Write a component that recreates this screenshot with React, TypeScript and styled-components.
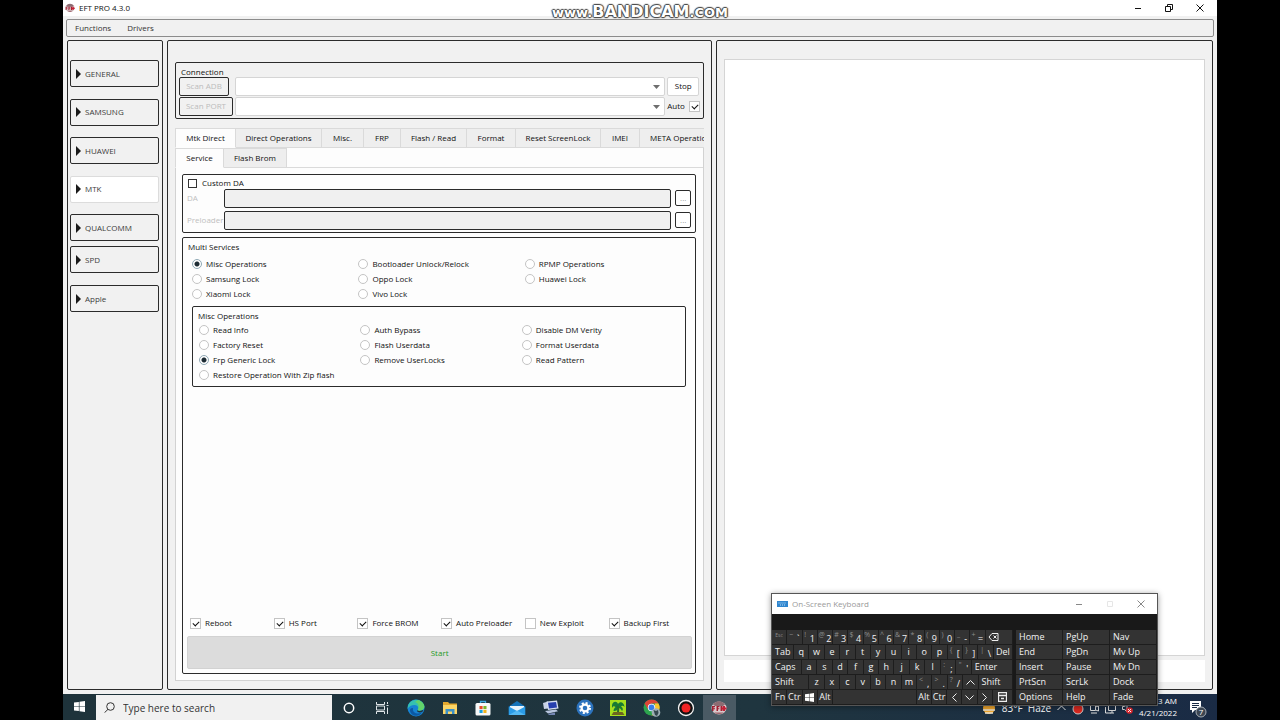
import React from "react";
import styled, { createGlobalStyle, css } from "styled-components";

const Global = createGlobalStyle`
  * { box-sizing: border-box; }
  body { margin: 0; background: #000; }
  body, button, input, select { font-family: "Open Sans", "Noto Sans", sans-serif; font-size: 8px; line-height: 12px; color: #111; }
  button, input, select { margin: 0; padding: 0; }
`;

const line = "#2b2b2b";

const Screen = styled.div`
  position: relative;
  min-height: 100vh;
  margin: 0 63px;
  display: flex;
  flex-direction: column;
  background: #f1f1f1;
`;

/* ---------- window chrome ---------- */

const TitleBar = styled.header`
  display: flex;
  align-items: center;
  height: 16px;
  padding: 0 11px 1px 2px;
  gap: 4px;
  background: #fff;
`;
const Title = styled.h1`
  flex: 1;
  margin: 0;
  font-size: 8px;
  font-weight: 400;
`;
const WindowButtons = styled.div`
  display: flex;
  gap: 19px;
`;
const IconButton = styled.button`
  display: flex;
  align-items: center;
  justify-content: center;
  width: 12px;
  height: 12px;
  border: 0;
  background: none;
  color: inherit;
`;
const MenuBar = styled.nav`
  display: flex;
  align-items: center;
  gap: 16px;
  height: 18px;
  margin: 3px 3px 3px;
  padding: 0 8px;
  border: 1px solid #8c8c8c;
  border-radius: 2px;
`;
const MenuItem = styled.button`
  border: 0;
  background: none;
  color: #333;
`;
const Watermark = styled.div`
  position: absolute;
  top: 2px;
  left: 0;
  right: 0;
  display: flex;
  justify-content: center;
  align-items: baseline;
  font-family: "DejaVu Sans", sans-serif;
  font-weight: 700;
  font-size: 13px;
  line-height: 19px;
  color: #fff;
  text-shadow: 1px 0 1px #444, -1px 0 1px #444, 0 1px 1px #444, 0 -1px 1px #444, 0 0 2px #666;
  pointer-events: none;
`;
const WatermarkName = styled.span`
  font-size: 16px;
`;

/* ---------- main columns ---------- */

const Columns = styled.main`
  flex: 1;
  display: flex;
  gap: 4px;
  padding: 0 4px 4px;
`;
const Panel = styled.section`
  display: flex;
  flex-direction: column;
  border: 1px solid ${line};
  border-radius: 2px;
`;
const Sidebar = styled(Panel)`
  width: 96px;
  padding: 19px 3px 0 2px;
  gap: 5px;
`;
const Center = styled(Panel)`
  flex: 546 1 0;
  min-width: 0;
  padding: 21px 7px 8px 7px;
`;
const LogPanel = styled(Panel)`
  flex: 496 1 0;
  min-width: 0;
  padding: 18px 7px 7px;
  gap: 4px;
`;
const SideGroup = styled.div<{ $height: number }>`
  display: flex;
  flex-direction: column;
  justify-content: space-between;
  height: ${(p) => p.$height}px;
`;
const SideButton = styled.button<{ $active?: boolean }>`
  display: flex;
  align-items: center;
  gap: 4px;
  height: 27px;
  padding: 0 5px;
  border: 1px solid ${(p) => (p.$active ? "#dcdcdc" : line)};
  border-radius: 2px;
  background: ${(p) => (p.$active ? "#fff" : "#f1f1f1")};
  color: #3c3c3c;
`;

/* ---------- form parts ---------- */

const Box = styled.div`
  border: 1px solid ${line};
  border-radius: 2px;
`;
const BoxTitle = styled.h2`
  margin: 0;
  font-size: 8px;
  font-weight: 400;
  line-height: 12px;
`;
const ConnectionBox = styled(Box)`
  padding: 5px 3px 2px;
`;
const ConnectionTitle = styled(BoxTitle)`
  margin-left: 2px;
  line-height: 8px;
`;
const ConnectionRow = styled.div`
  display: flex;
  align-items: center;
  height: 20px;
  gap: 2px;
`;
const ScanSlot = styled.div`
  flex: none;
  width: 54px;
`;
const ScanButton = styled.button<{ $width: number }>`
  display: block;
  width: ${(p) => p.$width}px;
  height: 19px;
  border: 1px solid ${line};
  border-radius: 2px;
  background: #f1f1f1;
  color: #bcbcbc;
`;
const ComboWrap = styled.div`
  position: relative;
  flex: 1;
  svg { position: absolute; right: 5px; top: 8px; pointer-events: none; }
`;
const Combo = styled.select`
  display: block;
  width: 100%;
  height: 19px;
  appearance: none;
  border: 1px solid #d5d5d5;
  border-radius: 2px;
  background: #fff;
`;
const ConnectionEnd = styled.div`
  flex: none;
  width: 33px;
`;
const StopButton = styled.button`
  width: 32px;
  height: 19px;
  border: 1px solid #d5d5d5;
  border-radius: 2px;
  background: #fff;
`;
const Choice = styled.label<{ $spread?: boolean }>`
  display: flex;
  align-items: center;
  justify-content: ${(p) => (p.$spread ? "space-between" : "flex-start")};
  gap: 4px;
  white-space: nowrap;
`;
const Check = styled.input.attrs({ type: "checkbox" })<{ $dark?: boolean }>`
  position: relative;
  flex: none;
  appearance: none;
  width: 11px;
  height: 11px;
  border: 1px solid ${(p) => (p.$dark ? "#333" : "#c4c4c4")};
  background: #fff;
  ${(p) => p.$dark && css`width: 9px; height: 9px; margin: 0 1px;`}
  &:checked::after {
    content: "";
    position: absolute;
    left: 2px;
    top: 2px;
    width: 5px;
    height: 3px;
    border-left: 1px solid #111;
    border-bottom: 1px solid #111;
    transform: rotate(-45deg);
  }
`;
const Radio = styled.input.attrs({ type: "radio" })`
  flex: none;
  appearance: none;
  width: 10px;
  height: 10px;
  border: 1px solid #c4c4c4;
  border-radius: 50%;
  background: #fff;
  &:checked {
    border-color: #8fa9b5;
    background: radial-gradient(circle, #1c2b33 0 2px, #fff 3px);
  }
`;

/* ---------- tabs ---------- */

const TabBar = styled.div`
  display: flex;
  flex: none;
  overflow: hidden;
`;
const MainTabs = styled(TabBar)`
  margin-top: 9px;
`;
const Tab = styled.button<{ $width: number; $active?: boolean }>`
  flex: none;
  width: ${(p) => p.$width}px;
  height: 20px;
  border: 1px solid #dadada;
  border-left-width: ${(p) => (p.$active ? 1 : 0)}px;
  border-bottom-color: ${(p) => (p.$active ? "#fdfdfd" : "#dadada")};
  background: ${(p) => (p.$active ? "#fdfdfd" : "#eee")};
  white-space: nowrap;
`;
const TabPage = styled.div`
  flex: 1;
  display: flex;
  flex-direction: column;
  border: 1px solid #d2d2d2;
  border-top: 0;
  background: #fdfdfd;
`;
const SubTabs = styled(TabBar)`
  margin-left: -1px;
  &::after { content: ""; flex: 1; border-bottom: 1px solid #dadada; }
`;
const ServicePage = styled.div`
  flex: 1;
  display: flex;
  flex-direction: column;
  gap: 4px;
  padding: 6px 7px 6px 6px;
`;

const CustomBox = styled(Box)`
  display: flex;
  flex-direction: column;
  padding: 4px 4px 1px 4px;
`;
const CustomChoice = styled(Choice)`
  height: 8px;
`;
const FileRow = styled.div`
  display: flex;
  align-items: center;
  gap: 4px;
  height: 22px;
`;
const FileLabel = styled.label`
  flex: none;
  width: 33px;
  color: #c0c0c0;
`;
const FileInput = styled.input`
  flex: 1;
  min-width: 0;
  height: 19px;
  border: 1px solid ${line};
  border-radius: 2px;
  background: #f0f0f0;
`;
const DotsButton = styled.button`
  flex: none;
  width: 16px;
  height: 16px;
  border: 1px solid ${line};
  border-radius: 2px;
  background: #fff;
  color: #999;
  line-height: 10px;
`;
const ServicesBox = styled(Box)`
  flex: 1;
  display: flex;
  flex-direction: column;
  padding: 3px 3px 4px 4px;
`;
const Choices = styled.div`
  display: grid;
  grid-template-columns: repeat(3, 1fr);
  grid-auto-rows: 15px;
`;
const ServiceChoices = styled(Choices)`
  margin: 3px 1px 0 5px;
`;
const ServicesTitle = styled(BoxTitle)`
  margin-left: 1px;
`;
const MiscBox = styled(Box)`
  height: 81px;
  margin: 5px 6px 0 5px;
  padding: 3px 2px 3px 5px;
`;
const MiscChoices = styled(Choices)`
  margin-left: 1px;
`;
const Options = styled.div`
  display: grid;
  grid-template-columns: repeat(6, 1fr);
  margin: auto 0 7px 3px;
`;
const StartButton = styled.button`
  height: 33px;
  border: 1px solid #d2d2d2;
  border-radius: 2px;
  background: #dcdcdc;
  color: #1e9a1e;
`;

const Log = styled.div`
  flex: 1;
  border: 1px solid #d5d5d5;
  background: #fff;
`;
const Command = styled.input`
  height: 22px;
  border: 0;
  background: #fff;
`;

/* ---------- taskbar ---------- */

const Taskbar = styled.footer`
  display: flex;
  height: 26px;
  padding-top: 1px;
  background: linear-gradient(90deg, #1e333b 0, #1f353f 60%, #1a2b45 100%);
  color: #fff;
`;
const StartMenu = styled.button`
  width: 33px;
  border: 0;
  background: none;
`;
const Search = styled.label`
  display: flex;
  align-items: center;
  gap: 8px;
  width: 236px;
  padding: 0 8px;
  background: #f1f1f1;
  color: #333;
`;
const SearchInput = styled.input`
  flex: 1;
  min-width: 0;
  border: 0;
  background: none;
  font-size: 10px;
  line-height: 16px;
  &::placeholder { color: #333; opacity: 1; }
`;
const AppButton = styled.button<{ $active?: boolean }>`
  display: flex;
  align-items: center;
  justify-content: center;
  width: 33px;
  border: 0;
  background: ${(p) => (p.$active ? "#4a5a64" : "none")};
`;
const Apps = styled.div`
  display: flex;
  justify-content: space-between;
  width: 404px;
`;
const Tray = styled.div`
  display: flex;
  align-items: flex-start;
  gap: 6px;
  margin-left: auto;
  padding-right: 10px;
  white-space: nowrap;
`;
const Weather = styled.span`
  font-size: 10px;
  line-height: 27px;
`;
const TrayIcon = styled.span`
  display: flex;
  align-items: center;
  height: 27px;
`;
const Clock = styled.time`
  display: flex;
  flex-direction: column;
  align-items: flex-end;
  margin-right: 4px;
  font-size: 8px;
  line-height: 12px;
`;

/* ---------- on-screen keyboard ---------- */

const Keyboard = styled.aside`
  position: absolute;
  right: 59px;
  bottom: 14px;
  width: 387px;
  border: 1px solid #555;
  background: #191919;
  box-shadow: 0 1px 6px rgba(0, 0, 0, 0.4);
  color: #f0f0f0;
`;
const KeyboardTitle = styled.div`
  display: flex;
  align-items: center;
  gap: 4px;
  height: 20px;
  margin-bottom: 16px;
  padding: 0 10px 0 5px;
  background: #fff;
  color: #999;
`;
const KeyboardName = styled.h2`
  flex: 1;
  margin: 0;
  font-size: 8px;
  font-weight: 400;
`;
const KeyboardButtons = styled(WindowButtons)`
  color: #888;
`;
const KeyArea = styled.div`
  display: flex;
  gap: 3px;
`;
const KeyRows = styled.div`
  display: grid;
  grid-auto-rows: 15px;
  width: 241px;
`;
const KeyRow = styled.div`
  display: flex;
`;
const NavKeys = styled.div`
  flex: 1;
  display: grid;
  grid-template-columns: repeat(3, 1fr);
  grid-auto-rows: 15px;
`;
const Key = styled.button<{ $grow?: number; $left?: boolean }>`
  position: relative;
  display: flex;
  align-items: center;
  justify-content: ${(p) => (p.$left ? "flex-start" : "center")};
  flex: ${(p) => p.$grow ?? 15} 1 0;
  min-width: 0;
  overflow: hidden;
  text-indent: ${(p) => (p.$left ? 3 : 0)}px;
  border: solid #1d1d1d;
  border-width: 0 1px 1px 0;
  background: #333;
  color: #f2f2f2;
  font-size: 9px;
  line-height: 12px;
  white-space: nowrap;
`;
const DualKey = styled.button`
  display: flex;
  justify-content: space-around;
  flex: 15 1 0;
  min-width: 0;
  border: solid #1d1d1d;
  border-width: 0 1px 1px 0;
  background: #333;
  color: #f2f2f2;
  font-size: 9px;
  line-height: 17px;
`;
const ShiftMark = styled.span<{ $tiny: boolean }>`
  font-size: ${(p) => (p.$tiny ? 5 : 7)}px;
  line-height: 10px;
  color: #8c8c8c;
`;

/* ---------- drawings ---------- */

const AppLogo = ({ size = 10 }: { size?: number }) => (
  <svg width={size} height={size} viewBox="0 0 16 16" aria-hidden="true">
    <ellipse cx="8" cy="8" rx="7.500" ry="6.500" fill="#d9c9cc" />
    <path d="M2 4.500A7 6.500 0 0 1 14 4.500L12 6H4z" fill="#8d6b72" />
    <path d="M1 6h3v1.300H2.500v1H4v1H2.500V11H1zM5.500 6h3v1.200H7v1h1.300v1H7V11H5.500zM9.500 6h2v5H9.500z" fill="#a21f30" />
    <path d="M10.500 8.500h5M13 6v5" stroke="#c62036" strokeWidth="2" />
    <path d="M3 12.500h10a7 5 0 0 1-10 0z" fill="#9b6068" />
  </svg>
);
const Minimize = () => (
  <svg width="8" height="8" viewBox="0 0 8 8"><path d="M1 4.500h6" stroke="currentColor" /></svg>
);
const Restore = () => (
  <svg width="8" height="8" viewBox="0 0 8 8" fill="none" stroke="currentColor"><path d="M.5 2.500h5v5h-5zM2.500 2.500v-2h5v5h-2" /></svg>
);
const Maximize = () => (
  <svg width="8" height="8" viewBox="0 0 8 8" fill="none" stroke="#e6e6e6"><path d="M1.500 1.500h5v5h-5z" /></svg>
);
const Close = () => (
  <svg width="8" height="8" viewBox="0 0 8 8"><path d="M.5.5l7 7m0-7l-7 7" stroke="currentColor" /></svg>
);
const Triangle = () => (
  <svg width="5" height="10" viewBox="0 0 5 10" aria-hidden="true"><path d="M0 0l5 5-5 5z" fill="#1a1a1a" /></svg>
);
const Arrow = () => (
  <svg width="7" height="4" viewBox="0 0 7 4" aria-hidden="true"><path d="M0 0h7L3.500 4z" fill="#6e6e6e" /></svg>
);
const Windows = ({ size = 11 }: { size?: number }) => (
  <svg width={size} height={size} viewBox="0 0 12 12" aria-hidden="true">
    <path d="M0 1.700L5.300 1v4.700H0zM6 .9L12 0v5.700H6zM0 6.400h5.300V11L0 10.300zM6 6.400h6V12l-6-.9z" fill="#fff" />
  </svg>
);
const Chevron = ({ d }: { d: string }) => (
  <svg width="9" height="9" viewBox="0 0 9 9" fill="none" stroke="#eee"><path d={d} /></svg>
);

const appIcons: { name: string; active?: boolean; icon: React.ReactNode }[] = [
  { name: "Cortana", icon: <circle cx="9" cy="9" r="4.700" fill="none" stroke="#fff" strokeWidth="1.500" /> },
  {
    name: "Task View",
    icon: <path d="M3.500 3v2.500h8V3M3.500 15v-2.500h8V15M3.500 7h8v4h-8zM14.500 3v2M14.500 8.500V15M13.500 6.500h2" fill="none" stroke="#dfe5e8" />,
  },
  {
    name: "Edge",
    icon: (
      <>
        <circle cx="9" cy="9" r="8.500" fill="#1683d3" />
        <path d="M1 7C3-.5 14-1.500 17 6c1.500 4.500-2 6.500-6.500 5.500C12.500 9 11 6 7.500 6 4.500 6 2 7.500.5 10z" fill="#35c1b1" />
        <path d="M11 1c6 2 8 7 5 9.500-1.500 1.200-4 1.300-5.500.8C12.500 8 12 4 8 3z" fill="#62d36b" />
        <path d="M6 9c-1 4 3 7 9 4.500C11 19 4 17 3 12 2.700 10 4 8.500 6 9z" fill="#0c59a4" />
        <path d="M10 11.300c1.800 1 4.500.8 6.500-.5l-1 2c-2.500 1.300-6 .5-5.500-1.500z" fill="#20343d" />
      </>
    ),
  },
  {
    name: "File Explorer",
    icon: (
      <>
        <path d="M2 3h5l1.500 1.500H16V15H2z" fill="#e5a92f" />
        <path d="M2 6h14v9H2z" fill="#fbd567" />
        <path d="M4.500 15v-5h9v5h-2.500v-2.500H7V15z" fill="#3c91c8" />
      </>
    ),
  },
  {
    name: "Microsoft Store",
    icon: (
      <>
        <path d="M6.500 5V2.500h5V5" fill="none" stroke="#3ba8df" strokeWidth="1.300" />
        <rect x="1.500" y="4" width="15" height="12.500" rx="1.500" fill="#f6f8f8" />
        <path d="M5.500 7H8.600v3.100H5.500z" fill="#e64a28" /><path d="M9.400 7h3.100v3.100H9.400z" fill="#78b729" />
        <path d="M5.500 10.900h3.100V14H5.500z" fill="#18a0df" /><path d="M9.400 10.900h3.100V14H9.400z" fill="#f3b31b" />
      </>
    ),
  },
  {
    name: "Mail",
    icon: (
      <>
        <path d="M.8 7.500L9 2l8.200 5.500V16H.8z" fill="#1472b8" />
        <path d="M2 7h14v5H2z" fill="#e8f3fa" />
        <path d="M.8 7.500L9 12l8.200-4.500V16H.8z" fill="#2b9be6" />
        <path d="M.8 16L9 11.500l8.200 4.500z" fill="#54b8f2" />
      </>
    ),
  },
  {
    name: "Remote Computer",
    icon: (
      <>
        <path d="M1 4l5-1.500v7L2 10z" fill="#c8d2e6" />
        <path d="M4.500 2.500L15 1.500l1.500 8L6 11z" fill="#d5def0" />
        <path d="M6 3.800l8-.8 1 5.500-8 1z" fill="#263fae" />
        <path d="M3 12l11-1.500 2 1.800L6 14.500z" fill="#b8c5df" />
        <path d="M6 15l7-1.500v2.500H7z" fill="#7486b4" />
      </>
    ),
  },
  {
    name: "Settings",
    icon: (
      <>
        <circle cx="9" cy="9" r="8.500" fill="#2c73be" />
        <circle cx="9" cy="9" r="4.900" fill="none" stroke="#fff" strokeWidth="2.200" strokeDasharray="2 1.850" />
        <circle cx="9" cy="9" r="3.400" fill="none" stroke="#fff" strokeWidth="2.200" />
      </>
    ),
  },
  {
    name: "Palm Tool",
    icon: (
      <>
        <path d="M1 1h16v16H1z" fill="#a6df1e" />
        <path d="M3 6c1-4 5-4 6-1 2-3 6-2 6.500 3-1.500-2-2.500-1.500-3.500-.5 2 1 2.500 3.500 1 4.500-1-2-2-3-3.500-3-.5 2-3 3.500-5 3 0-2 1-3 2-4C5 6.500 4 7 3 9z" fill="#187b34" />
        <path d="M8.500 7c1.500 2 .5 5 .5 6" fill="none" stroke="#2c6a28" strokeWidth="2" />
        <path d="M2.500 16l2-3h9l2 3z" fill="#6e6420" />
      </>
    ),
  },
  {
    name: "Chrome",
    icon: (
      <>
        <circle cx="8.500" cy="8.500" r="8" fill="#2da44e" />
        <path d="M1.600 4.500A8 8 0 0 1 15.500 4.500H8.500L5 10.500z" fill="#dc4437" />
        <path d="M15.500 4.500a8 8 0 0 1-7 12l3.500-6-.2-6z" fill="#f8c62c" />
        <circle cx="8.500" cy="8.500" r="3.700" fill="#fff" /><circle cx="8.500" cy="8.500" r="2.900" fill="#387ee8" />
        <circle cx="13" cy="13.500" r="4.300" fill="#9daeb5" />
        <path d="M10.500 11l2.500 1 2-1 .5 3-1.500 3-2-1z" fill="#34474e" />
      </>
    ),
  },
  {
    name: "Recorder",
    icon: (
      <>
        <circle cx="9" cy="9" r="7.500" fill="#111" stroke="#f2f2f2" strokeWidth="1.300" />
        <circle cx="9" cy="9" r="4.500" fill="#f02424" />
      </>
    ),
  },
  { name: "EFT Pro", active: true, icon: null },
];

/* ---------- data ---------- */

const sideGroups = [
  { height: 181, items: ["GENERAL", "SAMSUNG", "HUAWEI", "MTK", "QUALCOMM"] },
  { height: 66, items: ["SPD", "Apple"] },
];
const mainTabs: [string, number][] = [
  ["Mtk Direct", 61], ["Direct Operations", 86], ["Misc.", 42], ["FRP", 37], ["Flash / Read", 66],
  ["Format", 49], ["Reset ScreenLock", 85], ["IMEI", 39], ["META Operations", 86],
];
const services = [
  "Misc Operations", "Bootloader Unlock/Relock", "RPMP Operations", "Samsung Lock", "Oppo Lock",
  "Huawei Lock", "Xiaomi Lock", "Vivo Lock",
];
const operations = [
  "Read Info", "Auth Bypass", "Disable DM Verity", "Factory Reset", "Flash Userdata", "Format Userdata",
  "Frp Generic Lock", "Remove UserLocks", "Read Pattern", "Restore Operation With Zip flash",
];
const options: [string, boolean][] = [
  ["Reboot", true], ["HS Port", true], ["Force BROM", true], ["Auto Preloader", true], ["New Exploit", false], ["Backup First", true],
];

type KeySpec = { t: React.ReactNode; s?: string; w?: number; left?: boolean };
const letters = (text: string): KeySpec[] => text.split("").map((t) => ({ t }));
const keyRows: KeySpec[][] = [
  [
    { t: "", s: "Esc" }, { t: "`", s: "~" }, { t: "1", s: "!" }, { t: "2", s: "@" }, { t: "3", s: "#" }, { t: "4", s: "$" },
    { t: "5", s: "%" }, { t: "6", s: "^" }, { t: "7", s: "&" }, { t: "8", s: "*" }, { t: "9", s: "(" }, { t: "0", s: ")" },
    { t: "-", s: "_" }, { t: "=", s: "+" },
    { t: <svg width="13" height="8" viewBox="0 0 13 8" fill="none" stroke="#eee"><path d="M6 .5h6v7H6L3 4zM7.500 2.500l3 3m0-3l-3 3" /></svg>, w: 28, left: true },
  ],
  [
    { t: "Tab", w: 22, left: true }, ...letters("qwertyuiop"), { t: "[", s: "{" }, { t: "]", s: "}" },
    { t: "\\", s: "|" }, { t: "Del", w: 19 },
  ],
  [{ t: "Caps", w: 30, left: true }, ...letters("asdfghjkl"), { t: ";", s: ":" }, { t: "'", s: "\"" }, { t: "Enter", w: 42, left: true }],
  [
    { t: "Shift", w: 38, left: true }, ...letters("zxcvbnm"), { t: ",", s: "<" }, { t: ".", s: ">" }, { t: "/", s: "?" },
    { t: <Chevron d="M.5 6.500l4-4 4 4" /> }, { t: "Shift", w: 35, left: true },
  ],
  [
    { t: "Fn", left: true }, { t: "Ctr" }, { t: <Windows size={9} /> }, { t: "Alt" }, { t: "", w: 87 }, { t: "Alt" }, { t: "Ctr" },
    { t: <Chevron d="M6.500.5l-4 4 4 4" /> }, { t: <Chevron d="M.5 2.500l4 4 4-4" /> }, { t: <Chevron d="M2.500.5l4 4-4 4" /> },
    { t: <svg width="9" height="10" viewBox="0 0 9 10" fill="none" stroke="#eee"><path d="M.5.5h8v9h-8zM1 3.500h7M3 6.500h3" strokeWidth="1.300" /></svg>, w: 20 },
  ],
];
const navKeys = [
  "Home", "PgUp", "Nav", "End", "PgDn", "Mv Up", "Insert", "Pause", "Mv Dn", "PrtScn", "ScrLk", "Dock", "Options", "Help", "Fade",
];

export default function App() {
  return (
    <>
      <Global />
      <Screen>
        <TitleBar>
          <AppLogo />
          <Title>EFT PRO 4.3.0</Title>
          <WindowButtons>
            <IconButton aria-label="Minimize"><Minimize /></IconButton>
            <IconButton aria-label="Restore"><Restore /></IconButton>
            <IconButton aria-label="Close"><Close /></IconButton>
          </WindowButtons>
        </TitleBar>
        <Watermark>www.<WatermarkName>BANDICAM</WatermarkName>.COM</Watermark>
        <MenuBar>
          <MenuItem>Functions</MenuItem>
          <MenuItem>Drivers</MenuItem>
        </MenuBar>

        <Columns>
          <Sidebar>
            {sideGroups.map((group) => (
              <SideGroup key={group.height} $height={group.height}>
                {group.items.map((item) => (
                  <SideButton key={item} $active={item === "MTK"}><Triangle />{item}</SideButton>
                ))}
              </SideGroup>
            ))}
          </Sidebar>

          <Center>
            <ConnectionBox>
              <ConnectionTitle>Connection</ConnectionTitle>
              <ConnectionRow>
                <ScanSlot><ScanButton disabled $width={50}>Scan ADB</ScanButton></ScanSlot>
                <ComboWrap><Combo aria-label="ADB device" /><Arrow /></ComboWrap>
                <ConnectionEnd><StopButton>Stop</StopButton></ConnectionEnd>
              </ConnectionRow>
              <ConnectionRow>
                <ScanSlot><ScanButton disabled $width={54}>Scan PORT</ScanButton></ScanSlot>
                <ComboWrap><Combo aria-label="Port" /><Arrow /></ComboWrap>
                <ConnectionEnd><Choice $spread>Auto<Check defaultChecked /></Choice></ConnectionEnd>
              </ConnectionRow>
            </ConnectionBox>

            <MainTabs role="tablist">
              {mainTabs.map(([name, width], i) => (
                <Tab key={name} role="tab" $width={width} $active={i === 0}>{name}</Tab>
              ))}
            </MainTabs>
            <TabPage>
              <SubTabs role="tablist">
                <Tab role="tab" $width={49} $active>Service</Tab>
                <Tab role="tab" $width={63}>Flash Brom</Tab>
              </SubTabs>
              <ServicePage>
                <CustomBox>
                  <CustomChoice><Check $dark />Custom DA</CustomChoice>
                  <FileRow>
                    <FileLabel htmlFor="da">DA</FileLabel>
                    <FileInput id="da" disabled />
                    <DotsButton disabled>...</DotsButton>
                  </FileRow>
                  <FileRow>
                    <FileLabel htmlFor="preloader">Preloader</FileLabel>
                    <FileInput id="preloader" disabled />
                    <DotsButton disabled>...</DotsButton>
                  </FileRow>
                </CustomBox>
                <ServicesBox>
                  <ServicesTitle>Multi Services</ServicesTitle>
                  <ServiceChoices>
                    {services.map((name, i) => (
                      <Choice key={name}><Radio name="service" defaultChecked={i === 0} />{name}</Choice>
                    ))}
                  </ServiceChoices>
                  <MiscBox>
                    <BoxTitle>Misc Operations</BoxTitle>
                    <MiscChoices>
                      {operations.map((name) => (
                        <Choice key={name}><Radio name="operation" defaultChecked={name === "Frp Generic Lock"} />{name}</Choice>
                      ))}
                    </MiscChoices>
                  </MiscBox>
                  <Options>
                    {options.map(([name, on]) => (
                      <Choice key={name}><Check defaultChecked={on} />{name}</Choice>
                    ))}
                  </Options>
                  <StartButton>Start</StartButton>
                </ServicesBox>
              </ServicePage>
            </TabPage>
          </Center>

          <LogPanel>
            <Log role="log" />
            <Command aria-label="Command" />
          </LogPanel>
        </Columns>

        <Taskbar>
          <StartMenu aria-label="Start menu"><Windows /></StartMenu>
          <Search>
            <svg width="11" height="11" viewBox="0 0 11 11" fill="none" stroke="#333"><circle cx="6.500" cy="4.500" r="3.800" /><path d="M4 7.300L.5 10.700" /></svg>
            <SearchInput aria-label="Search" placeholder="Type here to search" />
          </Search>
          <Apps>
            {appIcons.map((app) => (
              <AppButton key={app.name} aria-label={app.name} $active={app.active}>
                {app.icon ? <svg width="18" height="18" viewBox="0 0 18 18">{app.icon}</svg> : <AppLogo size={16} />}
              </AppButton>
            ))}
          </Apps>
          <Tray>
            <TrayIcon><svg width="14" height="14" viewBox="0 0 14 14"><circle cx="7" cy="6" r="6" fill="#f0a72e" /><path d="M1 8h12M3 11h8" stroke="#e8e2d4" strokeWidth="1.500" /></svg></TrayIcon>
            <Weather>83°F&nbsp; Haze</Weather>
            <TrayIcon><Chevron d="M.5 6l4-4 4 4" /></TrayIcon>
            <TrayIcon><svg width="12" height="12" viewBox="0 0 12 12"><circle cx="6" cy="6" r="5" fill="#d8281f" stroke="#ccc" /></svg></TrayIcon>
            <TrayIcon><svg width="9" height="10" viewBox="0 0 9 10" fill="none" stroke="#ddd"><path d="M.5 1.500h5v5h-5zM5.500 3l3-1v5l-3-1M1 9h6" /></svg></TrayIcon>
            <TrayIcon><svg width="11" height="10" viewBox="0 0 11 10" fill="none" stroke="#ddd"><path d="M3.500 1.500h7v5h-7zM.5 3v6h5M7 6.500V9M5 9h4" /></svg></TrayIcon>
            <TrayIcon><svg width="11" height="11" viewBox="0 0 11 11"><path d="M.5 3.500h2l2.500-2v7l-2.500-2h-2z" fill="none" stroke="#ddd" /><circle cx="7.500" cy="7.500" r="3.300" fill="#df2b32" /><path d="M6 6l3 3m0-3L6 9" stroke="#fff" /></svg></TrayIcon>
            <Clock><span>9:53 AM</span><span>4/21/2022</span></Clock>
            <TrayIcon>
              <svg width="20" height="20" viewBox="0 0 20 20">
                <path d="M3 2h11v9H8l-3 3v-3H3z" fill="#fff" /><path d="M5 4.500h7M5 6.500h7M5 8.500h5" stroke="#1a2b45" />
                <circle cx="14" cy="13" r="5" fill="#3c4652" stroke="#a6adb5" />
                <text x="14" y="16" fontSize="8" textAnchor="middle" fill="#fff">7</text>
              </svg>
            </TrayIcon>
          </Tray>
        </Taskbar>

        <Keyboard aria-label="On-Screen Keyboard">
          <KeyboardTitle>
            <svg width="11" height="6" viewBox="0 0 11 6"><path d="M0 0h11v6H0z" fill="#2f86cf" /><path d="M1.500 2h8M3 4h5" stroke="#bfe0f8" strokeDasharray="1 1" /></svg>
            <KeyboardName>On-Screen Keyboard</KeyboardName>
            <KeyboardButtons>
              <IconButton aria-label="Minimize"><Minimize /></IconButton>
              <IconButton aria-label="Maximize" disabled><Maximize /></IconButton>
              <IconButton aria-label="Close"><Close /></IconButton>
            </KeyboardButtons>
          </KeyboardTitle>
          <KeyArea>
            <KeyRows>
              {keyRows.map((row, r) => (
                <KeyRow key={r}>
                  {row.map((k, i) =>
                    k.s ? (
                      <DualKey key={i}><ShiftMark $tiny={k.s === "Esc"}>{k.s}</ShiftMark>{k.t}</DualKey>
                    ) : (
                      <Key key={i} $grow={k.w} $left={k.left}>{k.t}</Key>
                    ),
                  )}
                </KeyRow>
              ))}
            </KeyRows>
            <NavKeys>
              {navKeys.map((name) => <Key key={name} $left>{name}</Key>)}
            </NavKeys>
          </KeyArea>
        </Keyboard>
      </Screen>
    </>
  );
}
